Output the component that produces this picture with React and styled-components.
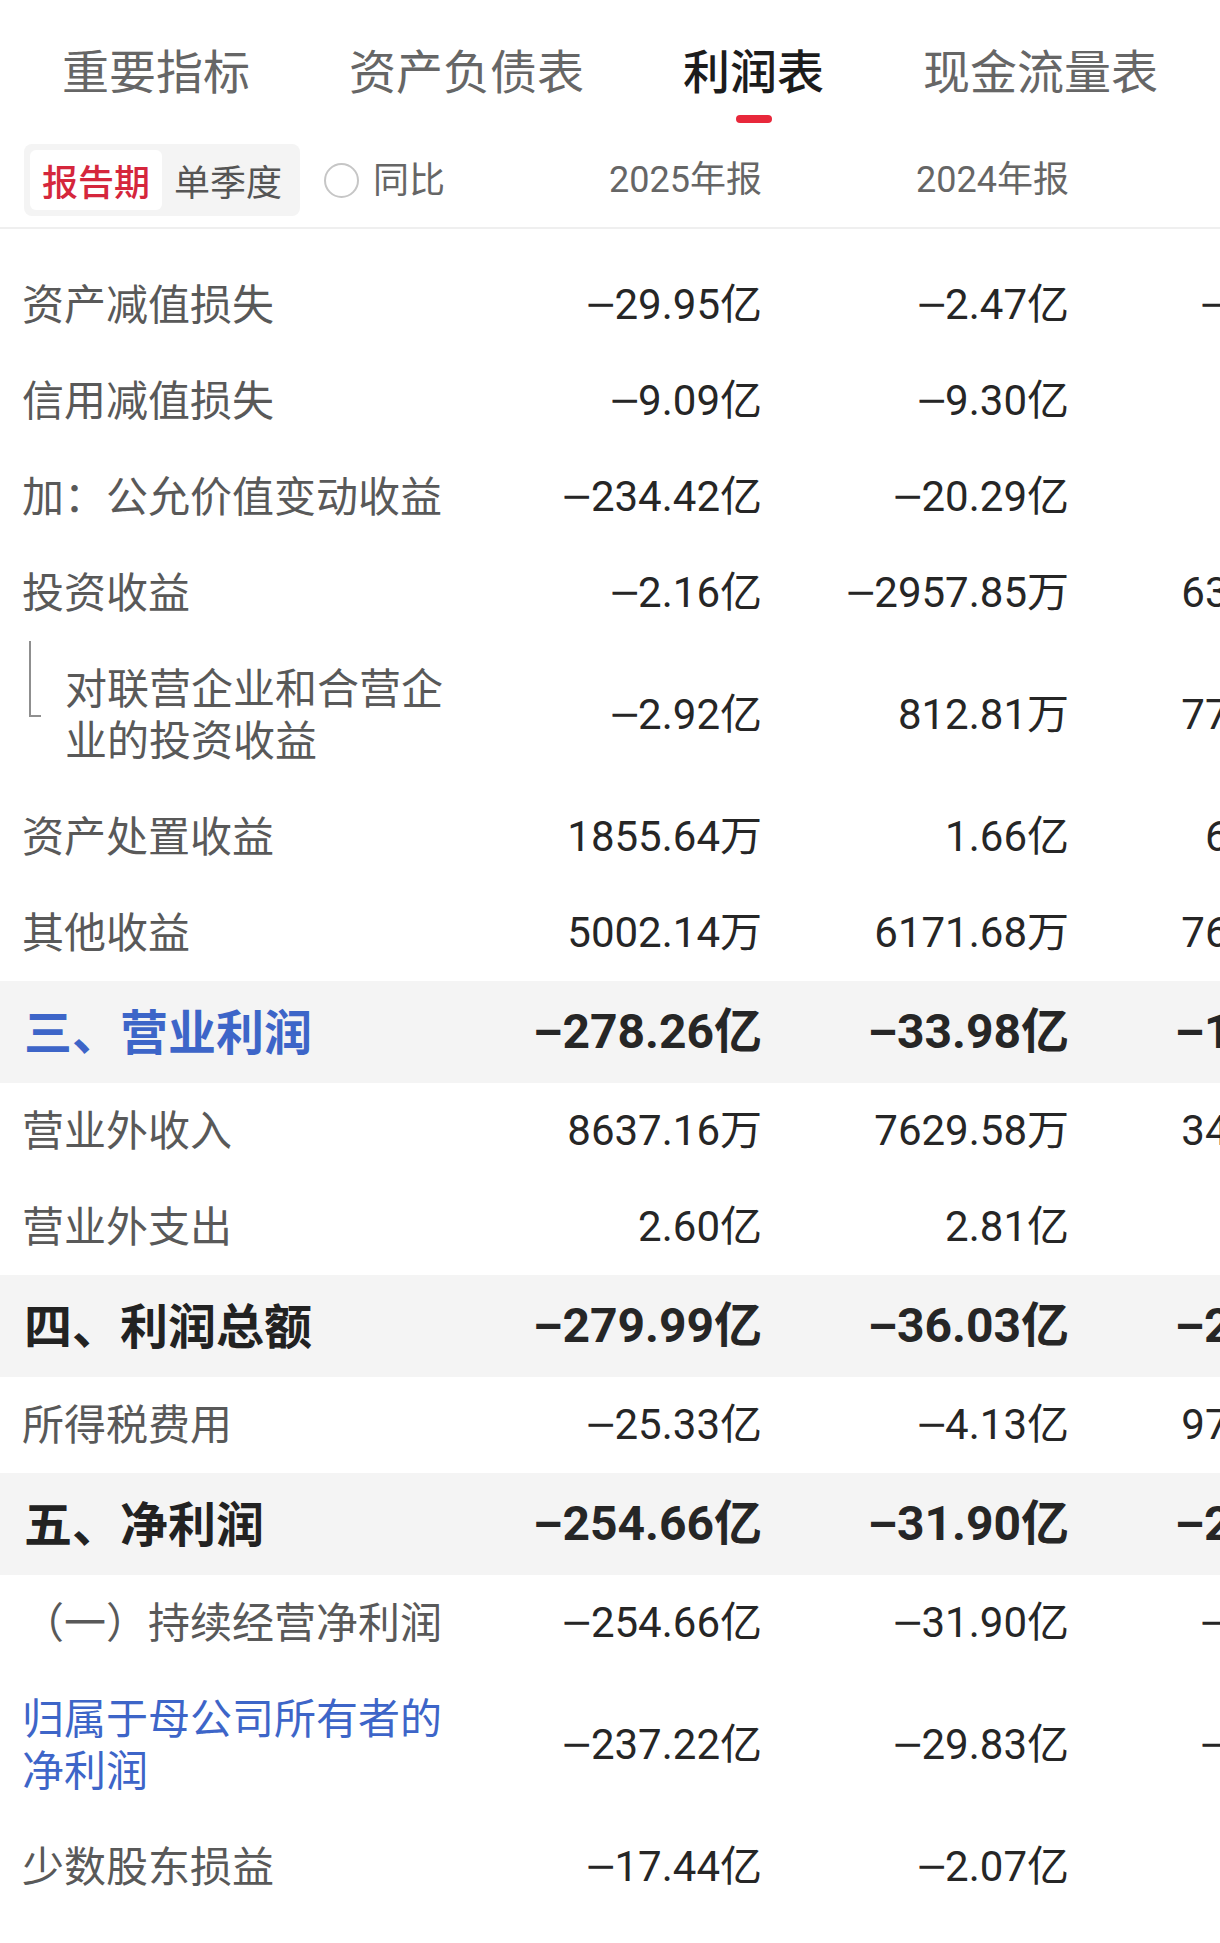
import React from "react";
import styled, { createGlobalStyle, css } from "styled-components";

const GlobalStyle = createGlobalStyle`
  html, body {
    margin: 0;
    padding: 0;
    background: #ffffff;
    overflow-x: hidden;
  }
  * { box-sizing: border-box; }
`;

const CJK = `"Noto Sans CJK SC", "Noto Sans", sans-serif`;
const NUM = `Roboto, "Noto Sans CJK SC", sans-serif`;

const Page = styled.div`
  width: 100%;
  overflow: hidden;
  font-family: ${CJK};
`;

const TabBar = styled.nav`
  display: flex;
  gap: 99px;
  padding: 39px 0 0 62px;
`;

const Tab = styled.div`
  display: flex;
  flex-direction: column;
  align-items: center;
  font-size: 47px;
  line-height: 60px;
  white-space: nowrap;
  color: ${(p) => (p.$active ? "#1c1c1c" : "#666666")};
  font-weight: ${(p) => (p.$active ? 500 : 400)};
`;

const Indicator = styled.span`
  display: block;
  width: 36px;
  height: 8px;
  margin-top: 16px;
  border-radius: 4px;
  background: ${(p) => (p.$show ? "#e8283b" : "transparent")};
`;

const Grid = styled.div`
  display: grid;
  grid-template-columns: 455px 307px 307px 307px;
  width: 1376px;
`;

const HeaderRow = styled(Grid)`
  margin-top: 21px;
  padding-bottom: 11px;
  border-bottom: 2px solid #efefef;
  align-items: center;
`;

const FilterCell = styled.div`
  display: flex;
  align-items: center;
  padding-left: 24px;
`;

const Segmented = styled.div`
  display: flex;
  padding: 6px;
  height: 72px;
  background: #f4f4f4;
  border-radius: 8px;
`;

const Segment = styled.div`
  width: 132px;
  display: flex;
  align-items: center;
  justify-content: center;
  font-size: 36px;
  border-radius: 6px;
  background: ${(p) => (p.$active ? "#ffffff" : "transparent")};
  color: ${(p) => (p.$active ? "#d5263c" : "#555555")};
  font-weight: ${(p) => (p.$active ? 500 : 400)};
`;

const Radio = styled.span`
  width: 35px;
  height: 35px;
  margin-left: 24px;
  border-radius: 50%;
  border: 2px solid #c6c6c6;
  background: #fff;
`;

const RadioLabel = styled.span`
  margin: -3px 0 3px 14px;
  font-size: 36px;
  color: #666666;
`;

const YearCell = styled.div`
  text-align: right;
  font-family: ${NUM};
  font-size: 36px;
  line-height: 72px;
  color: #666666;
  white-space: nowrap;
`;

const Body = styled.div`
  margin-top: 28px;
`;

const Row = styled(Grid)`
  align-items: center;
  min-height: ${(p) => (p.$highlight ? "102px" : "96px")};
  padding: 22px 0;
  background: ${(p) => (p.$highlight ? "#f4f4f4" : "transparent")};
`;

const labelColor = {
  normal: "#595959",
  blue: "#3d65c8",
  blueBold: "#3d65c8",
  bold: "#222222",
};

const LabelCell = styled.div`
  display: flex;
  align-items: flex-start;
  margin: -3px 0 3px;
  padding-left: 22px;
  padding-right: 9px;
  font-size: 42px;
  line-height: 52px;
  color: ${(p) => labelColor[p.$kind]};
  ${(p) =>
    (p.$kind === "bold" || p.$kind === "blueBold") &&
    css`
      font-size: 48px;
      line-height: 58px;
      font-weight: 700;
      padding-left: 24px;
    `}
`;

const Bracket = styled.span`
  flex: none;
  width: 12px;
  height: 76px;
  margin: -19px 24px 0 7px;
  border-left: 2px solid #8f8f8f;
  border-bottom: 2px solid #8f8f8f;
`;

const LabelText = styled.span`
  flex: 1;
  min-width: 0;
`;

const ValueCell = styled.div`
  text-align: right;
  white-space: nowrap;
  font-family: ${NUM};
  color: #262626;
  font-size: ${(p) => (p.$bold ? "48px" : "42px")};
  font-weight: ${(p) => (p.$bold ? 700 : 400)};
  line-height: 52px;
`;

const Sign = styled.span`
  display: inline-block;
  font-family: "Liberation Sans", Roboto, sans-serif;
  font-weight: inherit;
  margin-right: ${(p) => (p.$bold ? "0" : "4px")};
  transform: ${(p) => (p.$bold ? "none" : "scaleX(1.2)")};
  transform-origin: left center;
`;

const tabs = ["重要指标", "资产负债表", "利润表", "现金流量表"];

const rows = [
  { label: "资产减值损失", v: ["−29.95亿", "−2.47亿", "−12.36亿"] },
  { label: "信用减值损失", v: ["−9.09亿", "−9.30亿", "−5.12亿"] },
  { label: "加：公允价值变动收益", v: ["−234.42亿", "−20.29亿", "−3.68亿"] },
  { label: "投资收益", v: ["−2.16亿", "−2957.85万", "6335.20万"] },
  { label: "对联营企业和合营企业的投资收益", sub: true, v: ["−2.92亿", "812.81万", "7712.46万"] },
  { label: "资产处置收益", v: ["1855.64万", "1.66亿", "628.35万"] },
  { label: "其他收益", v: ["5002.14万", "6171.68万", "7658.93万"] },
  { label: "三、营业利润", kind: "blueBold", v: ["−278.26亿", "−33.98亿", "−15.62亿"] },
  { label: "营业外收入", v: ["8637.16万", "7629.58万", "3418.27万"] },
  { label: "营业外支出", v: ["2.60亿", "2.81亿", "1.35亿"] },
  { label: "四、利润总额", kind: "bold", v: ["−279.99亿", "−36.03亿", "−23.46亿"] },
  { label: "所得税费用", v: ["−25.33亿", "−4.13亿", "9725.14万"] },
  { label: "五、净利润", kind: "bold", v: ["−254.66亿", "−31.90亿", "−24.43亿"] },
  { label: "（一）持续经营净利润", v: ["−254.66亿", "−31.90亿", "−24.43亿"] },
  { label: "归属于母公司所有者的净利润", kind: "blue", v: ["−237.22亿", "−29.83亿", "−21.97亿"] },
  { label: "少数股东损益", v: ["−17.44亿", "−2.07亿", "−2.46亿"] },
];

function Value({ text, bold }) {
  const negative = text.startsWith("−");
  return (
    <ValueCell $bold={bold}>
      {negative && <Sign $bold={bold}>−</Sign>}
      {negative ? text.slice(1) : text}
    </ValueCell>
  );
}

export default function App() {
  return (
    <Page>
      <GlobalStyle />
      <TabBar>
        {tabs.map((t) => (
          <Tab key={t} $active={t === "利润表"}>
            {t}
            <Indicator $show={t === "利润表"} />
          </Tab>
        ))}
      </TabBar>

      <HeaderRow>
        <FilterCell>
          <Segmented>
            <Segment $active>报告期</Segment>
            <Segment>单季度</Segment>
          </Segmented>
          <Radio />
          <RadioLabel>同比</RadioLabel>
        </FilterCell>
        <YearCell>2025年报</YearCell>
        <YearCell>2024年报</YearCell>
        <YearCell>2023年报</YearCell>
      </HeaderRow>

      <Body>
        {rows.map((r) => {
          const kind = r.kind || "normal";
          const highlight = kind === "bold" || kind === "blueBold";
          return (
            <Row key={r.label} $highlight={highlight}>
              <LabelCell $kind={kind}>
                {r.sub && <Bracket />}
                <LabelText>{r.label}</LabelText>
              </LabelCell>
              {r.v.map((val, i) => (
                <Value key={i} text={val} bold={highlight} />
              ))}
            </Row>
          );
        })}
      </Body>
    </Page>
  );
}
